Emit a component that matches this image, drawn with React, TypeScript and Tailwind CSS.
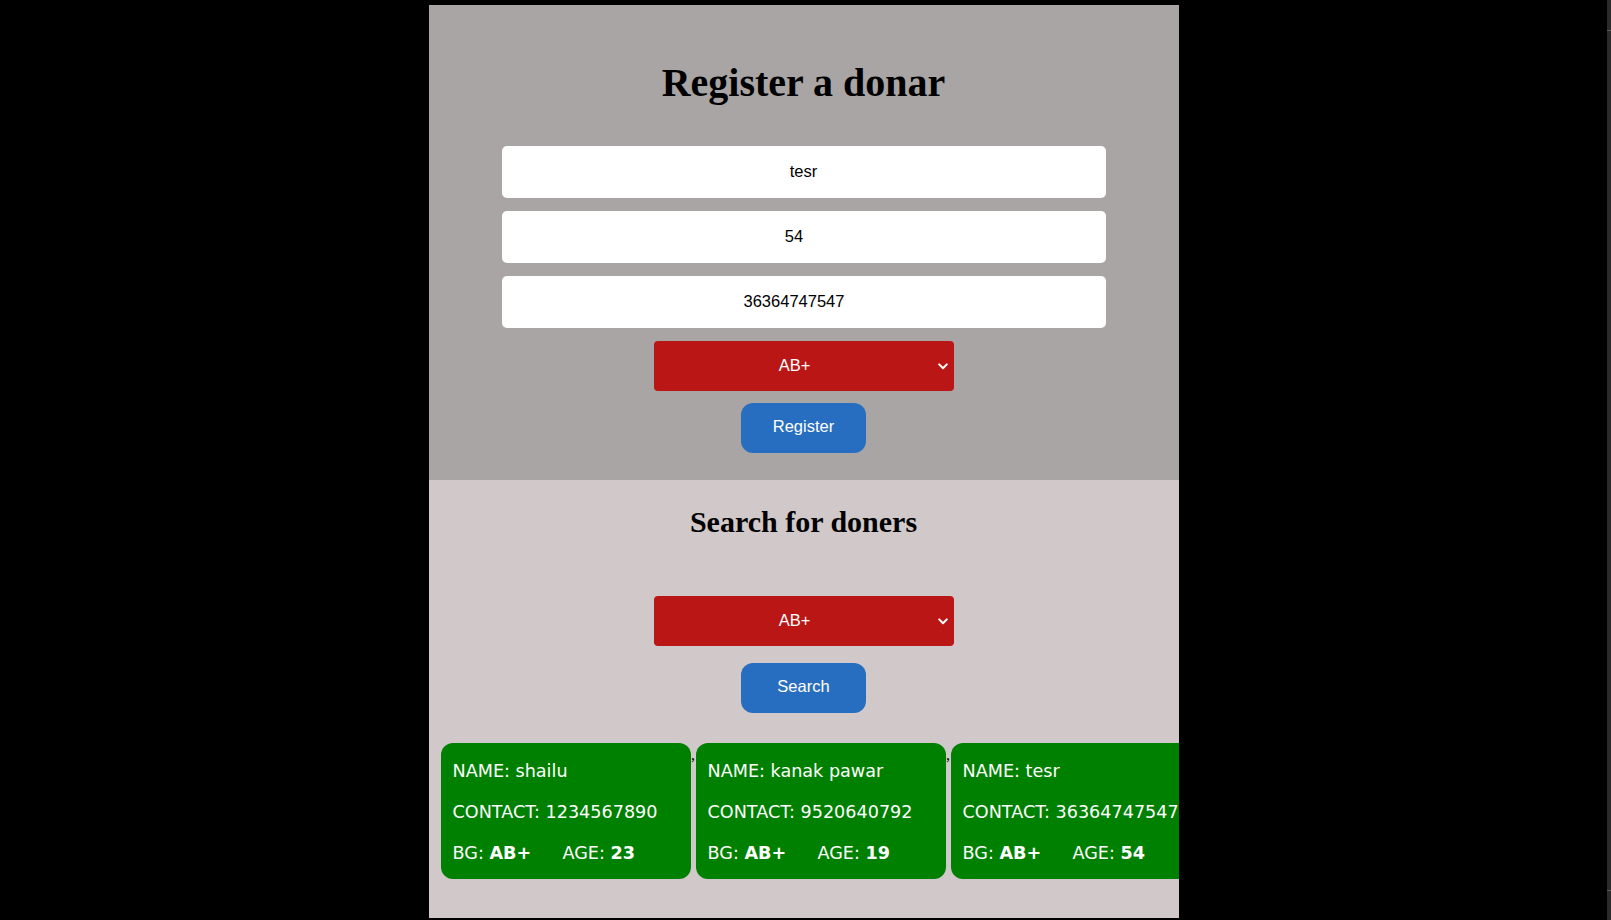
import React from "react";

const donors = [
  { name: "shailu", contact: "1234567890", bg: "AB+", age: "23" },
  { name: "kanak pawar", contact: "9520640792", bg: "AB+", age: "19" },
  { name: "tesr", contact: "36364747547", bg: "AB+", age: "54" },
];

const serif = { fontFamily: '"Liberation Serif", "Times New Roman", serif' };
const sans = { fontFamily: '"Liberation Sans", Arial, sans-serif' };
const comic = { fontFamily: '"Comic Sans MS", "DejaVu Sans", sans-serif' };

function Chevron() {
  return (
    <svg width="10" height="7" viewBox="0 0 10 7" className="shrink-0">
      <path d="M1.2 1.4 L5 5.2 L8.8 1.4" fill="none" stroke="white" strokeWidth="2" strokeLinecap="round" strokeLinejoin="round" />
    </svg>
  );
}

function BloodSelect() {
  return (
    <div className="flex h-[50px] w-[300px] items-center rounded-[4px] bg-[#bb1616] pr-[6px] text-white" style={sans}>
      <span className="flex-1 pb-[2px] text-center text-[16.5px]">AB+</span>
      <span className="ml-[2px] flex">
        <Chevron />
      </span>
    </div>
  );
}

function BlueButton({ label }: { label: string }) {
  return (
    <button
      className="flex h-[50px] w-[125px] items-center justify-center rounded-[12px] bg-[#286ec0] pb-[3px] text-[16.5px] text-white"
      style={sans}
    >
      {label}
    </button>
  );
}

function Field({ value, shift }: { value: string; shift?: boolean }) {
  return (
    <input
      readOnly
      value={value}
      className={
        "h-[52px] w-[604px] rounded-[5px] border-0 bg-white pb-[2px] text-center text-[16.5px] text-black outline-none " +
        (shift ? "pr-[19px]" : "")
      }
      style={sans}
    />
  );
}

export default function App() {
  return (
    <div className="flex h-[920px] w-full overflow-hidden bg-black">
      <div className="flex flex-1 justify-center pt-[5px]">
        <div className="flex w-[750px] flex-col">
          {/* Register section */}
          <section className="flex h-[475px] flex-col items-center bg-[#a9a5a4] pt-[55px]">
            <h1 className="text-[40px] font-bold leading-[46px] text-black" style={serif}>
              Register a donar
            </h1>
            <div className="mt-[40px] flex flex-col items-center gap-[13px]">
              <Field value="tesr" />
              <Field value="54" shift />
              <Field value="36364747547" shift />
            </div>
            <div className="mt-[13px]">
              <BloodSelect />
            </div>
            <div className="mt-[12px]">
              <BlueButton label="Register" />
            </div>
          </section>

          {/* Search section */}
          <section className="flex h-[438px] flex-col items-center bg-[#d0c8c9] pt-[25px]">
            <h2 className="text-[30px] font-bold leading-[34px] text-black" style={serif}>
              Search for doners
            </h2>
            <div className="mt-[57px]">
              <BloodSelect />
            </div>
            <div className="mt-[17px]">
              <BlueButton label="Search" />
            </div>
            <div className="mt-[30px] flex w-full overflow-hidden pl-[12px]">
              {donors.map((d, i) => (
                <React.Fragment key={d.name}>
                  {i > 0 && (
                    <span
                      className="mt-[3px] w-[5px] shrink-0 self-start text-center text-[16px] leading-[18px] text-black"
                      style={serif}
                    >
                      ,
                    </span>
                  )}
                  <div
                    className="h-[136px] w-[250px] shrink-0 rounded-[12px] bg-[#008000] pl-[12px] pt-[8px] text-[17.6px] leading-[41px] whitespace-nowrap text-white"
                    style={comic}
                  >
                    <div>NAME: {d.name}</div>
                    <div>CONTACT: {d.contact}</div>
                    <div className="flex">
                      <span className="w-[110px] shrink-0">
                        BG: <b>{d.bg}</b>
                      </span>
                      <span>
                        AGE: <b>{d.age}</b>
                      </span>
                    </div>
                  </div>
                </React.Fragment>
              ))}
            </div>
          </section>
        </div>
      </div>
      <div className="flex w-[4px] shrink-0 flex-col bg-[#2b2b2b]">
        <div className="h-[30px]" />
        <div className="h-[1px] bg-[#5c5c5c]" />
        <div className="h-[859px]" />
        <div className="h-[1px] bg-[#5c5c5c]" />
      </div>
    </div>
  );
}
